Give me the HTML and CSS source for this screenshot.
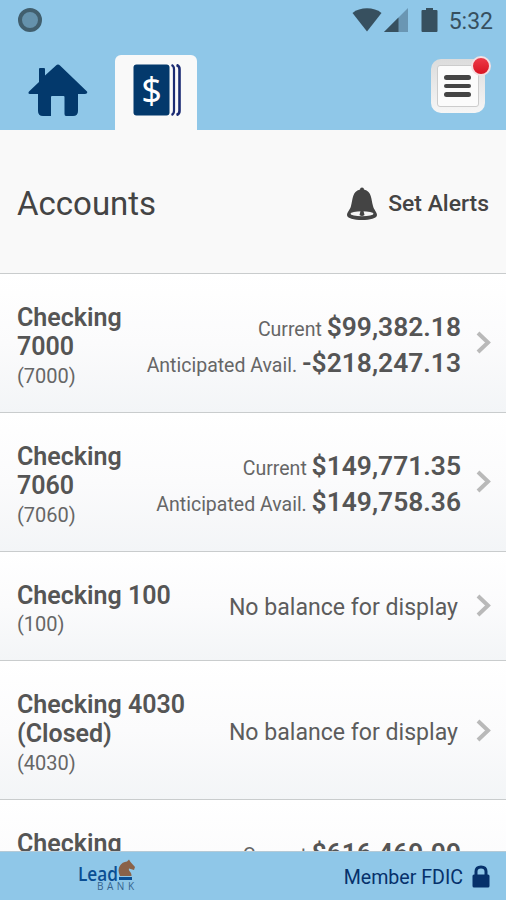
FILE: index.html
```html
<!DOCTYPE html>
<html lang="en">
<head>
    <meta charset="UTF-8">
    <meta name="viewport" content="width=device-width, initial-scale=1.0">
    <title>Accounts</title>
    <link rel="stylesheet" href="styles.css">
</head>
<body>
    <div class="app">
        <div class="status-bar">
            <div class="status-ring"></div>
            <div class="status-icons">
                <svg class="wifi" width="30" height="24" viewBox="0 0 30 24"><path d="M0.5 5 C8 -1.2 22 -1.2 29.5 5 L15 23.5 Z" fill="#37505f"/></svg>
                <svg class="signal" width="24" height="24" viewBox="0 0 24 24"><path d="M24 0 V24 H0 Z" fill="#6a96b3"/><path d="M14.5 9.5 V24 H0 Z" fill="#37505f"/></svg>
                <svg class="battery" width="17" height="24" viewBox="0 0 17 24"><path d="M5 0 H12 V2 H15.500 Q16.500 2 16.500 3 V23 Q16.500 24 15.500 24 H1.500 Q0.500 24 0.500 23 V3 Q0.500 2 1.500 2 H5 Z" fill="#37505f"/></svg>
                <span class="time">5:32</span>
            </div>
        </div>

        <div class="toolbar">
            <a href="#" class="home">
                <svg width="60" height="53" viewBox="0 0 60 53"><path d="M28 1.500 Q30 -0.500 32 1.500 L59 27.500 Q60 30 57 30 H50 V47 Q50 52 45 52 H38 Q36.500 52 36.500 50 V33 Q36.500 32 35.500 32 H24 Q23 32 23 33 V52 H15 Q10 52 10 47 V30 H2 Q-0.500 30 1 27.500 L11 18 V5 Q11 4 12 4 H16 Q17 4 17 5 V11.500 Z" fill="#03396c"/></svg>
            </a>
            <a href="#" class="tab">
                <svg width="48" height="52" viewBox="0 0 48 52">
                    <rect x="0.500" y="0.500" width="36" height="51" rx="3" fill="#03396c"/>
                    <path d="M38.500 1 Q41 2 41 5 V47 Q41 50 38.500 51" fill="none" stroke="#1b2b73" stroke-width="2.200"/>
                    <path d="M43.500 1 Q46.500 2 46.500 5 V47 Q46.500 50 43.500 51" fill="none" stroke="#1b2b73" stroke-width="2.600"/>
                    <text class="dollar" x="18.500" y="38.500" text-anchor="middle">$</text>
                </svg>
            </a>
            <a href="#" class="menu">
                <span class="menu-inner">
                    <span class="bar"></span>
                    <span class="bar"></span>
                    <span class="bar"></span>
                </span>
                <span class="badge"></span>
            </a>
        </div>

        <div class="heading">
            <h1>Accounts</h1>
            <a href="#" class="alerts">
                <svg width="30" height="34" viewBox="0 0 30 34">
                    <path d="M15 0.500 Q17 0.500 17 2.500 C25 4.500 24 12 26 19 C27 23 30 25 30 28 C30 31.500 23 33 15 33 C7 33 0 31.500 0 28 C0 25 3 23 4 19 C6 12 5 4.500 13 2.500 Q13 0.500 15 0.500 Z" fill="#444"/>
                    <ellipse cx="15" cy="26.800" rx="11.500" ry="2.500" fill="#f4f4f4"/>
                    <path d="M13.500 24 H16.500 L17.500 28 Q15 30 12.500 28 Z" fill="#444"/>
                </svg>
                <span>Set Alerts</span>
            </a>
        </div>

        <div class="accounts">
            <div class="account">
                <div class="name"><h2>Checking<br>7000</h2><p>(7000)</p></div>
                <div class="balances">
                    <p>Current <b>$99,382.18</b></p>
                    <p>Anticipated Avail. <b>-$218,247.13</b></p>
                </div>
                <svg class="chevron" width="15" height="23" viewBox="0 0 15 23"><path d="M2 2 L12 11.500 L2 21"/></svg>
            </div>
            <div class="account">
                <div class="name"><h2>Checking<br>7060</h2><p>(7060)</p></div>
                <div class="balances">
                    <p>Current <b>$149,771.35</b></p>
                    <p>Anticipated Avail. <b>$149,758.36</b></p>
                </div>
                <svg class="chevron" width="15" height="23" viewBox="0 0 15 23"><path d="M2 2 L12 11.500 L2 21"/></svg>
            </div>
            <div class="account">
                <div class="name"><h2>Checking 100</h2><p>(100)</p></div>
                <div class="no-balance">No balance for display</div>
                <svg class="chevron" width="15" height="23" viewBox="0 0 15 23"><path d="M2 2 L12 11.500 L2 21"/></svg>
            </div>
            <div class="account">
                <div class="name"><h2>Checking 4030<br>(Closed)</h2><p>(4030)</p></div>
                <div class="no-balance">No balance for display</div>
                <svg class="chevron" width="15" height="23" viewBox="0 0 15 23"><path d="M2 2 L12 11.500 L2 21"/></svg>
            </div>
            <div class="account">
                <div class="name"><h2>Checking<br>&nbsp;</h2><p>&nbsp;</p></div>
                <div class="balances">
                    <p>Current <b>$616,469.09</b></p>
                    <p>&nbsp;</p>
                </div>
            </div>
        </div>

        <div class="footer">
            <svg class="logo" width="60" height="34" viewBox="0 0 60 34">
                <text class="logo-lead" x="-1" y="22" textLength="40" lengthAdjust="spacingAndGlyphs">Lead</text>
                <text class="logo-bank" x="18" y="31" textLength="37">BANK</text>
                <path d="M41 17 C37 9 42 3 48 2.500 L50 0.500 L51.500 3 L56 8 L55 11 L50 9.500 C49 12 53 13 52.500 17 Z" fill="#8a6248"/>
                <path d="M40 18 H53 V21 H40 Z" fill="#0a4e93"/>
            </svg>
            <div class="fdic">
                <span>Member FDIC</span>
                <svg width="18" height="23" viewBox="0 0 18 23"><path d="M4 11 V6.500 Q4 2 9 2 Q14 2 14 6.500 V11" fill="none" stroke="#06316b" stroke-width="3"/><rect x="0.500" y="9.500" width="17" height="13" rx="1.500" fill="#06316b"/></svg>
            </div>
        </div>
    </div>
</body>
</html>
```
FILE: styles.css
```css
* {
    margin: 0;
    padding: 0;
    box-sizing: border-box;
}

body {
    font-family: Roboto, "Liberation Sans", sans-serif;
    color: #555;
}

a {
    color: inherit;
    text-decoration: none;
}

svg {
    display: block;
}

.app {
    width: 506px;
    height: 900px;
    display: flex;
    flex-direction: column;
    overflow: hidden;
    background: #f9f9f9;
}

/* Status bar */
.status-bar {
    height: 40px;
    flex: none;
    display: flex;
    align-items: center;
    justify-content: space-between;
    padding: 0 13px 0 18px;
    background: #8fc7e8;
}

.status-ring {
    width: 24px;
    height: 24px;
    border: 4px solid #415f6e;
    border-radius: 50%;
    background: #6592ac;
}

.status-icons {
    display: flex;
    align-items: center;
}

.signal {
    margin-left: 2px;
}

.battery {
    margin-left: 13px;
}

.time {
    margin-left: 11px;
    padding-top: 3px;
    font-size: 23px;
    line-height: 37px;
    color: #37505f;
}

/* Toolbar */
.toolbar {
    height: 90px;
    flex: none;
    display: flex;
    align-items: flex-start;
    padding: 15px 21px 0 28px;
    background: #8fc7e8;
}

.home {
    margin-top: 9px;
}

.tab {
    width: 82px;
    height: 75px;
    margin-left: 27px;
    padding: 9px 0 0 18px;
    border-radius: 6px 6px 0 0;
    background: #f9f9f9;
}

.dollar {
    font-family: "Noto Sans", sans-serif;
    font-size: 36px;
    fill: #fff;
}

.menu {
    position: relative;
    width: 54px;
    height: 54px;
    margin: 4px 0 0 auto;
    padding: 6px;
    border-radius: 10px;
    background: linear-gradient(#dcdcdc, #f6f6f6);
}

.menu-inner {
    display: flex;
    flex-direction: column;
    align-items: center;
    justify-content: center;
    gap: 4px;
    height: 42px;
    padding-right: 2px;
    border: 1px solid #ccc;
    border-radius: 3px;
    background: #fbfbfb;
}

.bar {
    width: 27px;
    height: 4.5px;
    border-radius: 3px;
    background: #444;
}

.badge {
    position: absolute;
    top: -3px;
    right: -6px;
    width: 20px;
    height: 20px;
    border: 2px solid #f3dfe2;
    border-radius: 50%;
    background: linear-gradient(#ee3a48, #d81322);
}

/* Heading */
.heading {
    height: 143px;
    flex: none;
    display: flex;
    align-items: center;
    justify-content: space-between;
    padding: 4px 17px 0;
}

.heading h1 {
    font-size: 33px;
    font-weight: 400;
    color: #444;
}

.alerts {
    display: flex;
    align-items: center;
    gap: 11px;
    font-size: 22.9px;
    font-weight: 500;
    color: #444;
}

/* Account list */
.accounts {
    flex: 1;
    min-height: 0;
    overflow: hidden;
}

.account {
    display: flex;
    align-items: center;
    padding: 29px 15px 20.8px 17px;
    border-top: 1px solid #c9cccd;
    background: linear-gradient(#fff, #fbfbfc 50%, #f3f5f7);
}

.name {
    flex: 1;
    line-height: 29px;
}

.name h2 {
    font-size: 25px;
    font-weight: 600;
    line-height: 29.3px;
    white-space: nowrap;
}

.name p {
    margin-top: 0.4px;
    font-size: 20px;
    color: #666;
}

.balances {
    font-size: 19.5px;
    line-height: 36px;
    text-align: right;
    white-space: nowrap;
    color: #666;
    margin: -5px 0 -7px;
}

.balances b {
    font-size: 26.4px;
    font-weight: 600;
    line-height: 30px;
    color: #555;
}

.balances + .chevron {
    margin-left: 15px;
}

.account:last-child {
    padding-right: 45px;
}

.no-balance {
    margin-top: -4px;
    font-size: 23.1px;
    white-space: nowrap;
    color: #5c5c5c;
}

.chevron {
    margin: -8px 0 0 18px;
    fill: none;
    stroke: #b9b9b9;
    stroke-width: 4;
}

/* Footer */
.footer {
    height: 49px;
    flex: none;
    display: flex;
    align-items: center;
    justify-content: space-between;
    padding: 0 16px 0 79px;
    border-top: 1px solid #b5cad6;
    background: #8fc7e8;
}

.logo-lead {
    font-family: "Open Sans", sans-serif;
    font-size: 20px;
    font-weight: 600;
    fill: #0a4e93;
}

.logo-bank {
    font-family: "Open Sans", sans-serif;
    font-size: 10px;
    fill: #35648f;
}

.fdic {
    display: flex;
    align-items: center;
    gap: 9px;
    font-size: 19.6px;
    color: #06316b;
}

.fdic span {
    padding-top: 2px;
}
```
